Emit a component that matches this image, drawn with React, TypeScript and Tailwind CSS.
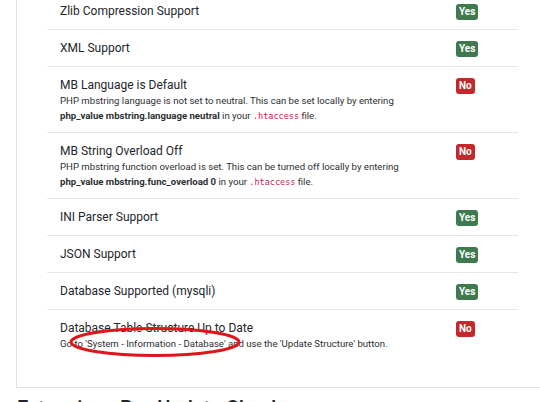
type Row = {
  title: string;
  ok: boolean;
  desc?: React.ReactNode[];
};

const Code = ({ children }: { children: React.ReactNode }) => (
  <code className="font-['DejaVu_Sans_Mono',monospace] text-[8.5px] text-[#c7254e]">{children}</code>
);

const rows: Row[] = [
  { title: "Zlib Compression Support", ok: true },
  { title: "XML Support", ok: true },
  {
    title: "MB Language is Default",
    ok: false,
    desc: [
      <>PHP mbstring language is not set to neutral. This can be set locally by entering</>,
      <>
        <strong className="font-bold">php_value mbstring.language neutral</strong> in your <Code>.htaccess</Code> file.
      </>,
    ],
  },
  {
    title: "MB String Overload Off",
    ok: false,
    desc: [
      <>PHP mbstring function overload is set. This can be turned off locally by entering</>,
      <>
        <strong className="font-bold">php_value mbstring.func_overload 0</strong> in your <Code>.htaccess</Code> file.
      </>,
    ],
  },
  { title: "INI Parser Support", ok: true },
  { title: "JSON Support", ok: true },
  { title: "Database Supported (mysqli)", ok: true },
  {
    title: "Database Table Structure Up to Date",
    ok: false,
    desc: [<>Go to 'System - Information - Database' and use the 'Update Structure' button.</>],
  },
];

function Badge({ ok }: { ok: boolean }) {
  return (
    <span
      className={
        "block w-fit rounded-[3px] px-[3px] text-[10px] leading-[16px] font-bold text-white " +
        (ok ? "bg-[#3f7a4f]" : "bg-[#c5282a]")
      }
    >
      {ok ? "Yes" : "No"}
    </span>
  );
}

export default function App() {
  return (
    <div className="relative w-[540px] h-[402px] overflow-hidden bg-white font-['Roboto',sans-serif] text-[#22262a]">
      <div className="-mt-[7px] ml-[16px] w-[560px] border-l border-b border-[#dde2e7] pb-[27px]">
        <div className="ml-[30px] w-[471px]">
          {rows.map((r, i) => (
            <div
              key={r.title}
              className={"flex " + (i < rows.length - 1 ? "border-b border-[#e4e7ea]" : "")}
            >
              <div className={"flex-1 pl-[13px] pt-[8px] " + (r.desc ? "pb-[9px]" : "pb-[8px]")}>
                <div className="h-[20px] text-[12px] leading-[20px]">{r.title}</div>
                {r.desc && (
                  <div className="-mt-[2px] text-[9.6px] text-[#2b2f33]">
                    {r.desc.map((line, j) => (
                      <div key={j} className="h-[15px] leading-[15px] whitespace-nowrap">
                        {line}
                      </div>
                    ))}
                  </div>
                )}
              </div>
              <div className="w-[72px] pl-[10px] pt-[11px] leading-none">
                <Badge ok={r.ok} />
              </div>
            </div>
          ))}
        </div>
      </div>
      <h2 className="ml-[17px] mt-[8px] text-[20px] leading-[24px] font-medium text-[#22262a]">
        Extensions Pre-Update Check
      </h2>
      <svg className="absolute left-0 top-0 pointer-events-none" width="540" height="402">
        <ellipse cx="155" cy="342" rx="84" ry="13.5" fill="none" stroke="#e0141b" strokeWidth="3" />
      </svg>
    </div>
  );
}
